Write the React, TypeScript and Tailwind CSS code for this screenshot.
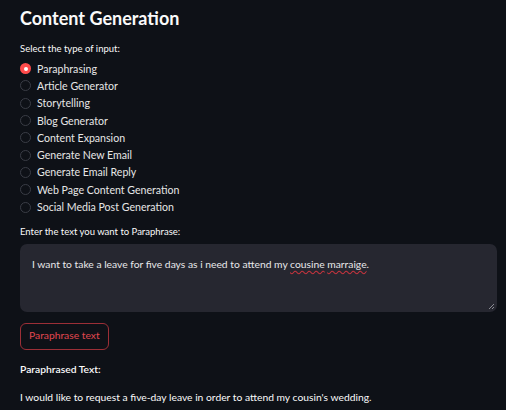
import React from "react";

const options = [
  "Paraphrasing",
  "Article Generator",
  "Storytelling",
  "Blog Generator",
  "Content Expansion",
  "Generate New Email",
  "Generate Email Reply",
  "Web Page Content Generation",
  "Social Media Post Generation",
];

export default function App() {
  return (
    <div
      className="w-[506px] h-[410px] overflow-hidden bg-[#0e1117] text-[#fafafa] pl-[20px] pr-[9px] pt-[4px]"
      style={{ fontFamily: "Lato, 'Noto Sans', sans-serif" }}
    >
      <h1 className="text-[18px] font-bold leading-[28px] text-[#fafafa]">Content Generation</h1>
      <div className="mt-[10px] text-[9.5px] leading-[14px] text-[#fafafa]">Select the type of input:</div>
      <div className="mt-[4px] flex flex-col">
        {options.map((o, i) => (
          <div key={o} className="flex items-center h-[17.3px] gap-[6px]">
            {i === 0 ? (
              <span className="w-[11px] h-[11px] rounded-full bg-[#ff4b4b] flex items-center justify-center">
                <span className="w-[4px] h-[4px] rounded-full bg-white" />
              </span>
            ) : (
              <span className="w-[11px] h-[11px] rounded-full border border-[#3a3d46] bg-[#0e1117]" />
            )}
            <span className="text-[10.6px] leading-[14px] text-[#e6e6e6]">{o}</span>
          </div>
        ))}
      </div>
      <div className="mt-[9px] text-[9.5px] leading-[14px] text-[#fafafa]">Enter the text you want to Paraphrase:</div>
      <div className="relative mt-[5px] h-[68px] rounded-[7px] bg-[#262730] px-[12px] pt-[13px] text-[10.3px] leading-[14px] text-[#e8e8ea]">
        I want to take a leave for five days as i need to attend my{" "}
        <span className="underline decoration-wavy decoration-[#c8333d] underline-offset-2">cousine</span>{" "}
        <span className="underline decoration-wavy decoration-[#c8333d] underline-offset-2">marraige</span>.
        <svg className="absolute right-[3px] bottom-[3px]" width="6" height="6" viewBox="0 0 6 6">
          <path d="M1 6 L6 1 M4 6 L6 4" stroke="#8a8b93" strokeWidth="1" />
        </svg>
      </div>
      <button className="mt-[11px] h-[27px] px-[8px] rounded-[6px] border border-[#9c2f37] text-[10.3px] text-[#e0474f] bg-[#0e1117]">
        Paraphrase text
      </button>
      <div className="mt-[12px] text-[10.3px] leading-[14px] font-semibold text-[#fafafa]">Paraphrased Text:</div>
      <div className="mt-[14px] text-[10.3px] leading-[14px] text-[#fafafa]">
        I would like to request a five-day leave in order to attend my cousin's wedding.
      </div>
    </div>
  );
}
